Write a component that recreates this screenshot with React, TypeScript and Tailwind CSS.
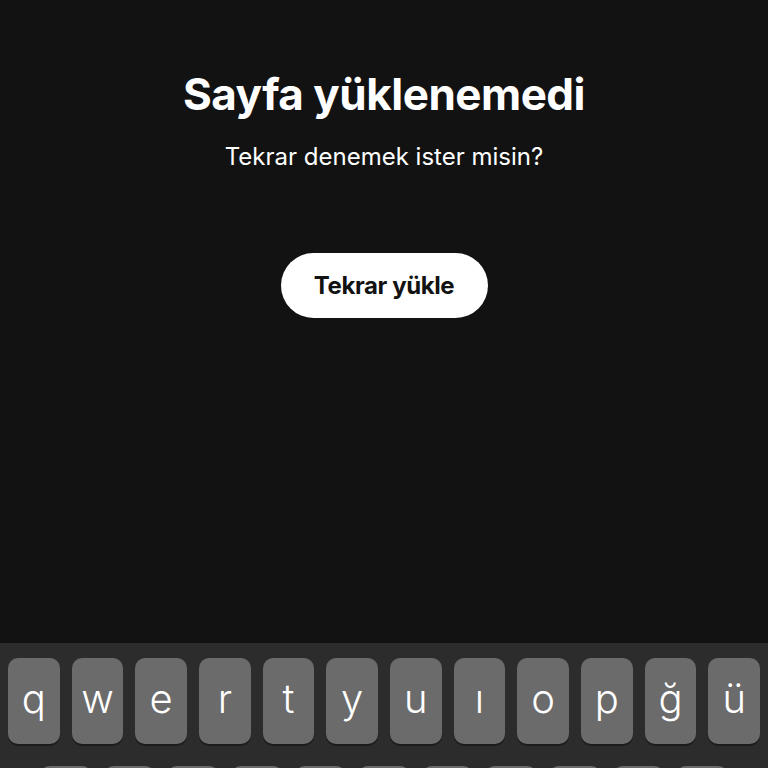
import React from 'react';

const row1 = ['q', 'w', 'e', 'r', 't', 'y', 'u', 'ı', 'o', 'p', 'ğ', 'ü'];
const row2 = ['a', 's', 'd', 'f', 'g', 'h', 'j', 'k', 'l', 'ş', 'i'];

function Key({ label }: { label: string }) {
  return (
    <div className="h-[86px] rounded-[10px] bg-[#6b6b6b] shadow-[0_2px_0_#1c1c1c] flex items-center justify-center pb-1 text-[40px] font-light text-white leading-none">
      {label}
    </div>
  );
}

export default function App() {
  return (
    <div className="h-screen w-full bg-[#121212] flex flex-col overflow-hidden" style={{ fontFamily: 'Inter, "Noto Sans", sans-serif' }}>
      {/* Error message */}
      <div className="flex-1 flex flex-col items-center pt-[68px]">
        <h1 className="text-[44px] font-bold text-white tracking-[-0.5px] leading-[52px]">Sayfa yüklenemedi</h1>
        <p className="mt-[23px] text-[24px] text-white leading-7">Tekrar denemek ister misin?</p>
        <button className="mt-[82px] w-[207px] h-[65px] rounded-full bg-white text-[#121212] text-[24px] font-bold tracking-[-0.4px]">
          Tekrar yükle
        </button>
      </div>

      {/* Keyboard */}
      <div className="h-[125px] shrink-0 bg-[#2c2c2c] pt-[15px]">
        <div className="grid grid-cols-12 gap-3 px-2">
          {row1.map((k) => (
            <Key key={k} label={k} />
          ))}
        </div>
        <div className="grid grid-cols-11 gap-3 px-10 mt-[22px]">
          {row2.map((k) => (
            <Key key={k} label={k} />
          ))}
        </div>
      </div>
    </div>
  );
}
